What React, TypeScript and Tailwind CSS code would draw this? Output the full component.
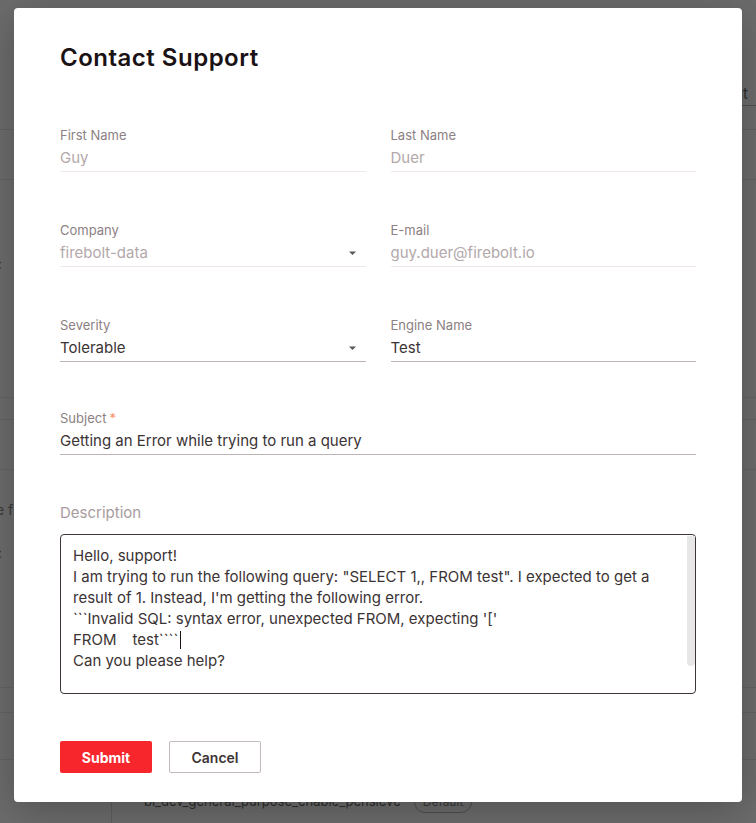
import React from "react";

function Caret() {
  return (
    <svg width="9" height="5" viewBox="0 0 9 5" className="mr-[9px] shrink-0">
      <path d="M1 0.5 L8 0.5 L4.5 4 Z" fill="#5b5557" />
    </svg>
  );
}

function Field({
  label,
  value,
  disabled,
  select,
  required,
}: {
  label: string;
  value: string;
  disabled?: boolean;
  select?: boolean;
  required?: boolean;
}) {
  return (
    <div className="flex flex-col">
      <div className="text-[13px] leading-4 text-[#8c8082]">
        {label}
        {required && <span className="ml-[3px] text-[#f3926a]">*</span>}
      </div>
      <div
        className={
          disabled
            ? "mt-[5px] flex items-center justify-between border-b border-[#efe7e9] pb-[3px]"
            : "mt-[5px] flex items-center justify-between border-b border-[#bdb3b4] pb-[3px]"
        }
      >
        <span
          className={
            disabled
              ? "text-[15px] leading-5 text-[#b3a8aa]"
              : "text-[15px] leading-5 text-[#3b3334]"
          }
        >
          {value}
        </span>
        {select && <Caret />}
      </div>
    </div>
  );
}

function Background() {
  return (
    <div className="absolute inset-0 flex flex-col text-[#2b2b2b]">
      <div className="relative h-[106px] shrink-0">
        <span className="absolute right-[8px] top-[84px] text-[15px] leading-5">Edit</span>
        <div className="absolute right-0 bottom-0 w-[30px] border-b border-[#4f4f4f]" />
      </div>
      <div className="h-[24px] shrink-0 border-b border-[#626262]" />
      <div className="h-[50px] shrink-0 border-b border-[#646464]" />
      <div className="relative h-[218px] shrink-0 border-b border-[#646464]">
        <span className="absolute left-[-2px] top-[74px] text-[14px] leading-5 text-[#3a3a3a]">:</span>
      </div>
      <div className="h-[22px] shrink-0 border-b border-[#646464]" />
      <div className="h-[50px] shrink-0 border-b border-[#646464]" />
      <div className="relative h-[218px] shrink-0 border-b border-[#646464]">
        <span className="absolute left-[-4px] top-[30px] text-[14px] leading-5 text-[#3a3a3a]">e f</span>
        <span className="absolute left-[-2px] top-[73px] text-[14px] leading-5 text-[#3a3a3a]">:</span>
      </div>
      <div className="h-[25px] shrink-0 border-b border-[#646464]" />
      <div className="h-[47px] shrink-0 border-b border-[#646464]" />
      <div className="flex flex-1">
        <div className="w-[112px] border-r border-[#5e5e5e]" />
        <div className="flex items-start gap-[13px] pl-[32px] pt-[31px]">
          <span className="text-[13px] leading-5 text-[#2e2e2e]">bi_dev_general_purpose_enable_pensieve</span>
          <span className="rounded-full border border-[#4e4e4e] px-[8px] text-[12px] leading-5 text-[#3a3a3a]">Default</span>
        </div>
      </div>
    </div>
  );
}

export default function App() {
  return (
    <div className="relative h-[823px] w-[756px] overflow-hidden bg-[#6c6c6c] font-['Inter','Liberation_Sans',sans-serif]">
      <Background />
      <div className="absolute left-[14px] top-[8px] flex h-[794px] w-[728px] flex-col rounded-[4px] bg-white px-[46px] pt-[34px] shadow-[0_8px_40px_rgba(0,0,0,0.25)]">
        <h1 className="text-[24px] font-semibold leading-8 tracking-[0.5px] text-[#1a1214]">
          Contact Support
        </h1>

        <div className="mt-[53px] grid grid-cols-2 gap-x-[25px] gap-y-[50px]">
          <Field label="First Name" value="Guy" disabled />
          <Field label="Last Name" value="Duer" disabled />
          <Field label="Company" value="firebolt-data" disabled select />
          <Field label="E-mail" value="guy.duer@firebolt.io" disabled />
          <Field label="Severity" value="Tolerable" select />
          <Field label="Engine Name" value="Test" />
        </div>

        <div className="mt-[48px]">
          <Field label="Subject" value="Getting an Error while trying to run a query" required />
        </div>

        <div className="mt-[48px] text-[15px] leading-5 text-[#a89c9e]">Description</div>

        <div className="relative mt-[11px] h-[160px] rounded-[4px] border border-[#3d3537] pl-[12px] pt-[10px] text-[15px] leading-[21px] text-[#3b3334]">
          <div className="whitespace-pre">Hello, support!</div>
          <div className="whitespace-pre">I am trying to run the following query: "SELECT 1,, FROM test". I expected to get a</div>
          <div className="whitespace-pre">result of 1. Instead, I'm getting the following error.</div>
          <div className="whitespace-pre">```Invalid SQL: syntax error, unexpected FROM, expecting '['</div>
          <div className="flex items-center whitespace-pre">
            <span>FROM</span>
            <span className="inline-block w-[16px]" />
            <span>test````</span>
            <span className="ml-[2px] inline-block h-[18px] w-px bg-[#1a1214]" />
          </div>
          <div className="whitespace-pre">Can you please help?</div>
          <div className="absolute right-0 top-[1px] h-[130px] w-[8px] rounded-b-[4px] bg-[#e7e7e7]" />
        </div>

        <div className="mt-[47px] flex gap-[17px]">
          <button className="h-[32px] w-[92px] rounded-[2px] bg-[#f7262d] text-[14px] font-bold text-white">
            Submit
          </button>
          <button className="h-[32px] w-[92px] rounded-[2px] border border-[#c2b9ba] bg-white text-[14px] font-semibold text-[#3d3435]">
            Cancel
          </button>
        </div>
      </div>
    </div>
  );
}
